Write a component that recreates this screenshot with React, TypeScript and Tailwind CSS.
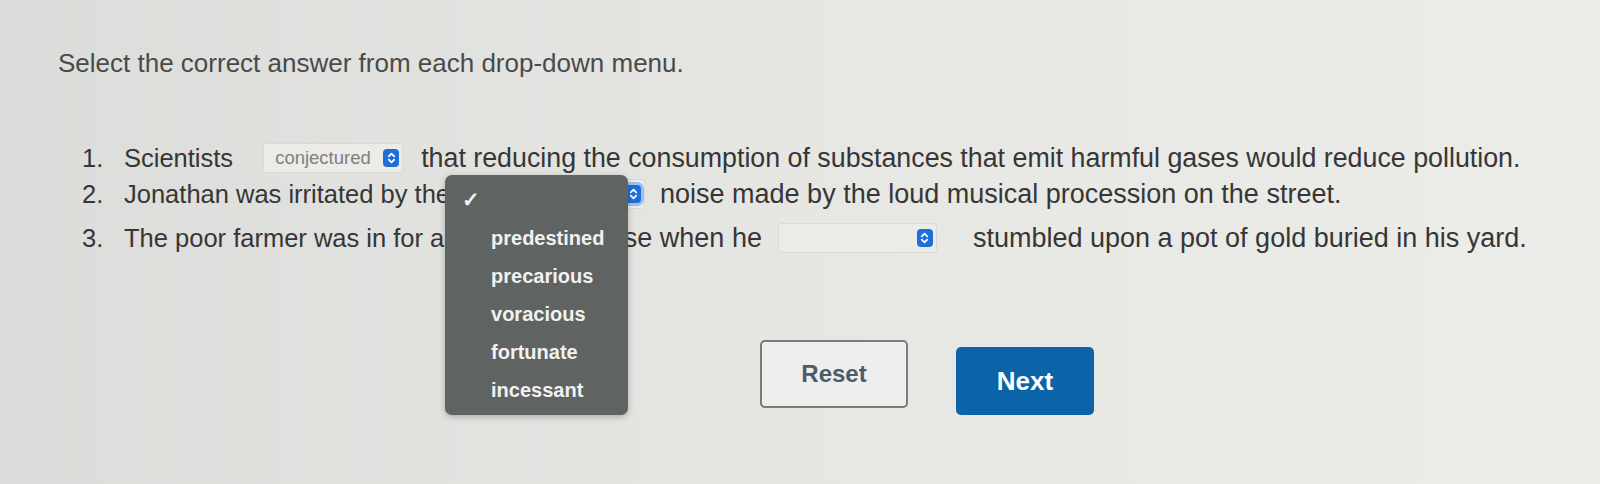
import React from "react";

function Stepper({ focused = false }: { focused?: boolean }) {
  return (
    <span
      className={`grid h-[18px] w-[16px] shrink-0 place-items-center rounded-[4px] bg-[#1f6fd8] ${
        focused ? "ring-[3px] ring-[#9dc0ee]" : ""
      }`}
    >
      <svg width="9" height="12" viewBox="0 0 9 12" fill="none" stroke="white" strokeWidth="1.8" strokeLinecap="round" strokeLinejoin="round">
        <path d="M1.8 4.4 L4.5 1.7 L7.2 4.4" />
        <path d="M1.8 7.6 L4.5 10.3 L7.2 7.6" />
      </svg>
    </span>
  );
}

function Select({
  width,
  value = "",
  focused = false,
  className = "",
  children,
}: {
  width: string;
  value?: string;
  focused?: boolean;
  className?: string;
  children?: React.ReactNode;
}) {
  return (
    <span
      className={`relative inline-flex h-[30px] shrink-0 items-center justify-between rounded-[3px] border border-[#d9d9d6] bg-[#ebebe8] pl-[11px] pr-[3px] ${width} ${className}`}
    >
      <span className="text-[18.5px] leading-none text-[#808080]">{value}</span>
      <Stepper focused={focused} />
      {children}
    </span>
  );
}

const options = ["predestined", "precarious", "voracious", "fortunate", "incessant"];

function Menu() {
  return (
    <div className="absolute left-[-14px] top-[-5px] z-10 w-[183px] rounded-[7px] bg-[#5f6362] py-[6px] shadow-[0_2px_6px_rgba(0,0,0,0.25)]">
      <div className="flex h-[38px] items-center pl-[17px] text-[21px] font-bold text-[#f4f4f4]">✓</div>
      {options.map((o) => (
        <div key={o} className="flex h-[38px] items-center pl-[46px] text-[20px] font-bold text-[#f1f1f1]">
          {o}
        </div>
      ))}
    </div>
  );
}

export default function App() {
  return (
    <div
      className="h-[484px] w-full overflow-hidden bg-linear-to-r from-[#dcdcda] via-[#e6e6e3] to-[#ecece9] text-[#363636]"
      style={{ fontFamily: '"Liberation Sans", Arial, sans-serif' }}
    >
      <h1 className="pl-[58px] pt-[48px] text-[26px] leading-[30px] text-[#4a4a4a]">
        Select the correct answer from each drop-down menu.
      </h1>

      <ol className="mt-[62px] pl-[82px] text-[25.5px]">
        <li className="flex h-[36px] items-center whitespace-nowrap">
          <span className="w-[42px]">1.</span>
          <span>Scientists</span>
          <Select width="w-[140px]" value="conjectured" className="ml-[30px] mr-[18px]" />
          <span className="text-[26.8px]">
            that reducing the consumption of substances that emit harmful gases would reduce pollution.
          </span>
        </li>
        <li className="flex h-[36px] items-center whitespace-nowrap">
          <span className="w-[42px]">2.</span>
          <span>Jonathan was irritated by the</span>
          <Select width="w-[187px]" focused className="ml-[8px] mr-[15px]">
            <Menu />
          </Select>
          <span className="text-[27px]">noise made by the loud musical procession on the street.</span>
        </li>
        <li className="mt-[8px] flex h-[36px] items-center whitespace-nowrap">
          <span className="w-[42px]">3.</span>
          <span>The poor farmer was in for a</span>
          <Select width="w-[93px]" className="ml-[10px] mr-[9px]" />
          <span className="text-[27px]">surprise when he</span>
          <Select width="w-[159px]" className="ml-[16px] mr-[36px]" />
          <span className="text-[27px]">stumbled upon a pot of gold buried in his yard.</span>
        </li>
      </ol>

      <div className="mt-[84px] flex items-start gap-[48px] pl-[760px]">
        <button className="h-[68px] w-[148px] rounded-[5px] border-2 border-[#7b7b7e] bg-[#eeeeec] text-[24px] font-bold text-[#4c5b6c]">
          Reset
        </button>
        <button className="mt-[7px] h-[68px] w-[138px] rounded-[5px] bg-[#0b63a8] text-[26px] font-bold text-white">
          Next
        </button>
      </div>
    </div>
  );
}
